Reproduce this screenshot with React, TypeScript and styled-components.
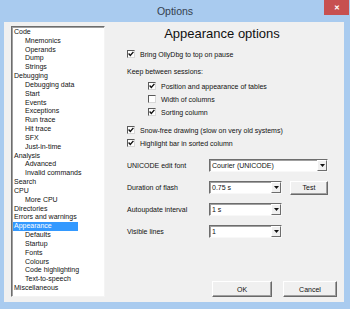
import React from 'react';
import styled, { createGlobalStyle } from 'styled-components';

const GlobalStyle = createGlobalStyle`
  html, body {
    margin: 0;
    padding: 0;
    background: #a9cbef;
  }
  body {
    width: 350px;
    height: 309px;
    overflow: hidden;
    font-family: "Liberation Sans", Arial, sans-serif;
  }
`;

type TreeItem = { label: string; level: number; selected?: boolean };

const treeItems: TreeItem[] = [
  { label: 'Code', level: 0 },
  { label: 'Mnemonics', level: 1 },
  { label: 'Operands', level: 1 },
  { label: 'Dump', level: 1 },
  { label: 'Strings', level: 1 },
  { label: 'Debugging', level: 0 },
  { label: 'Debugging data', level: 1 },
  { label: 'Start', level: 1 },
  { label: 'Events', level: 1 },
  { label: 'Exceptions', level: 1 },
  { label: 'Run trace', level: 1 },
  { label: 'Hit trace', level: 1 },
  { label: 'SFX', level: 1 },
  { label: 'Just-in-time', level: 1 },
  { label: 'Analysis', level: 0 },
  { label: 'Advanced', level: 1 },
  { label: 'Invalid commands', level: 1 },
  { label: 'Search', level: 0 },
  { label: 'CPU', level: 0 },
  { label: 'More CPU', level: 1 },
  { label: 'Directories', level: 0 },
  { label: 'Errors and warnings', level: 0 },
  { label: 'Appearance', level: 0, selected: true },
  { label: 'Defaults', level: 1 },
  { label: 'Startup', level: 1 },
  { label: 'Fonts', level: 1 },
  { label: 'Colours', level: 1 },
  { label: 'Code highlighting', level: 1 },
  { label: 'Text-to-speech', level: 1 },
  { label: 'Miscellaneous', level: 0 },
];

const CheckMark = () => (
  <svg width="6" height="6" viewBox="0 0 6 6">
    <path d="M0.6 2.6 L2.3 4.4 L5.4 0.9" fill="none" stroke="#111" strokeWidth="1.4" />
  </svg>
);

const Check = ({ checked }: { checked: boolean }) => (
  <CheckBox>{checked && <CheckMark />}</CheckBox>
);

const Combo = ({ value, width }: { value: string; width: number }) => (
  <ComboBox $width={width}>
    <ComboText>{value}</ComboText>
    <DropButton>
      <svg width="5" height="3" viewBox="0 0 5 3">
        <path d="M0 0 H5 L2.5 3 Z" fill="#111" />
      </svg>
    </DropButton>
  </ComboBox>
);

export default function App() {
  return (
    <>
      <GlobalStyle />
      <Window>
        <TitleBar>
          <span />
          <Title>Options</Title>
          <CloseButton>✕</CloseButton>
        </TitleBar>
        <Client>
          <Tree>
            {treeItems.map((item) => (
              <TreeRow key={item.label} $level={item.level}>
                <TreeLabel $selected={!!item.selected}>{item.label}</TreeLabel>
              </TreeRow>
            ))}
          </Tree>
          <Panel>
            <Heading>Appearance options</Heading>
            <CheckRow $top={6} $indent={0}>
              <Check checked />
              <span>Bring OllyDbg to top on pause</span>
            </CheckRow>
            <TextRow $top={6}>Keep between sessions:</TextRow>
            <CheckRow $top={2} $indent={21}>
              <Check checked />
              <span>Position and appearance of tables</span>
            </CheckRow>
            <CheckRow $top={1} $indent={21}>
              <Check checked={false} />
              <span>Width of columns</span>
            </CheckRow>
            <CheckRow $top={1} $indent={21}>
              <Check checked />
              <span>Sorting column</span>
            </CheckRow>
            <CheckRow $top={6} $indent={0}>
              <Check checked />
              <span>Snow-free drawing (slow on very old systems)</span>
            </CheckRow>
            <CheckRow $top={1} $indent={0}>
              <Check checked />
              <span>Highlight bar in sorted column</span>
            </CheckRow>
            <FormRow $top={10}>
              <FieldLabel>UNICODE edit font</FieldLabel>
              <Combo value="Courier (UNICODE)" width={119} />
            </FormRow>
            <FormRow $top={9}>
              <FieldLabel>Duration of flash</FieldLabel>
              <Combo value="0.75 s" width={73} />
              <Button $width={38} $height={14} $left={8}>Test</Button>
            </FormRow>
            <FormRow $top={9}>
              <FieldLabel>Autoupdate interval</FieldLabel>
              <Combo value="1 s" width={73} />
            </FormRow>
            <FormRow $top={9}>
              <FieldLabel>Visible lines</FieldLabel>
              <Combo value="1" width={73} />
            </FormRow>
            <ButtonRow>
              <Button $width={60} $height={16} $left={0}>OK</Button>
              <Button $width={54} $height={16} $left={0}>Cancel</Button>
            </ButtonRow>
          </Panel>
        </Client>
      </Window>
    </>
  );
}

const Window = styled.div`
  width: 350px;
  height: 309px;
  background: #a9cbef;
  display: flex;
  flex-direction: column;
  color: #111;
  font-size: 7px;
`;

const TitleBar = styled.div`
  height: 22px;
  display: grid;
  grid-template-columns: 1fr auto 1fr;
  align-items: start;
`;

const Title = styled.div`
  font-size: 10.5px;
  line-height: 22px;
  color: #34404e;
`;

const CloseButton = styled.div`
  justify-self: end;
  width: 25px;
  height: 15px;
  margin-right: 1px;
  background: #c75050;
  color: #fff;
  font-size: 7px;
  font-weight: bold;
  display: flex;
  align-items: center;
  justify-content: center;
`;

const Client = styled.div`
  flex: 1;
  margin: 0 6px 7px 4px;
  background: #f0f0f0;
  display: flex;
`;

const Tree = styled.div`
  box-sizing: border-box;
  width: 94px;
  margin: 4px 0 5px 7px;
  background: #fff;
  border: 1px solid;
  border-color: #6d6d6d #f4f4f4 #f4f4f4 #6d6d6d;
  box-shadow: inset 1px 1px 0 #a0a0a0;
  padding: 1px 0 0 1px;
  overflow: hidden;
`;

const TreeRow = styled.div<{ $level: number }>`
  height: 8.84px;
  line-height: 8.84px;
  padding-left: ${(p) => p.$level * 11}px;
  white-space: nowrap;
`;

const TreeLabel = styled.span<{ $selected: boolean }>`
  display: inline-block;
  padding-left: 1px;
  width: ${(p) => (p.$selected ? '64px' : 'auto')};
  background: ${(p) => (p.$selected ? '#3399ff' : 'transparent')};
  color: ${(p) => (p.$selected ? '#fff' : '#111')};
`;

const Panel = styled.div`
  flex: 1;
  display: flex;
  flex-direction: column;
  padding-left: 22px;
`;

const Heading = styled.div`
  margin-top: 4px;
  height: 16px;
  line-height: 16px;
  font-size: 13px;
  text-align: center;
  padding-right: 27px;
  color: #111;
`;

const CheckRow = styled.div<{ $top: number; $indent: number }>`
  height: 12px;
  margin-top: ${(p) => p.$top}px;
  padding-left: ${(p) => p.$indent}px;
  display: flex;
  align-items: center;
  gap: 5px;
  white-space: nowrap;
`;

const TextRow = styled.div<{ $top: number }>`
  height: 12px;
  line-height: 12px;
  margin-top: ${(p) => p.$top}px;
`;

const CheckBox = styled.div`
  box-sizing: border-box;
  width: 8px;
  height: 8px;
  background: #fff;
  border: 1px solid;
  border-color: #5a5a5a #d8d8d8 #d8d8d8 #5a5a5a;
  display: flex;
  align-items: center;
  justify-content: center;
  flex-shrink: 0;
`;

const FormRow = styled.div<{ $top: number }>`
  height: 13px;
  margin-top: ${(p) => p.$top}px;
  display: flex;
  align-items: center;
`;

const FieldLabel = styled.div`
  width: 82px;
  white-space: nowrap;
`;

const ComboBox = styled.div<{ $width: number }>`
  box-sizing: border-box;
  width: ${(p) => p.$width}px;
  height: 13px;
  background: #fff;
  border: 1px solid;
  border-color: #6d6d6d #f8f8f8 #f8f8f8 #6d6d6d;
  box-shadow: inset 1px 1px 0 #a0a0a0;
  display: flex;
  align-items: stretch;
`;

const ComboText = styled.div`
  flex: 1;
  padding-left: 2px;
  line-height: 11px;
  white-space: nowrap;
`;

const DropButton = styled.div`
  box-sizing: border-box;
  width: 10px;
  background: #f0f0f0;
  border: 1px solid;
  border-color: #fff #6d6d6d #6d6d6d #fff;
  display: flex;
  align-items: center;
  justify-content: center;
`;

const Button = styled.div<{ $width: number; $height: number; $left: number }>`
  box-sizing: border-box;
  width: ${(p) => p.$width}px;
  height: ${(p) => p.$height}px;
  margin-left: ${(p) => p.$left}px;
  background: #f0f0f0;
  border: 1px solid;
  border-color: #fff #696969 #696969 #fff;
  box-shadow: inset -1px -1px 0 #a0a0a0;
  display: flex;
  align-items: center;
  justify-content: center;
`;

const ButtonRow = styled.div`
  margin-top: auto;
  margin-bottom: 5px;
  padding-right: 7px;
  display: flex;
  justify-content: flex-end;
  gap: 11px;
`;
